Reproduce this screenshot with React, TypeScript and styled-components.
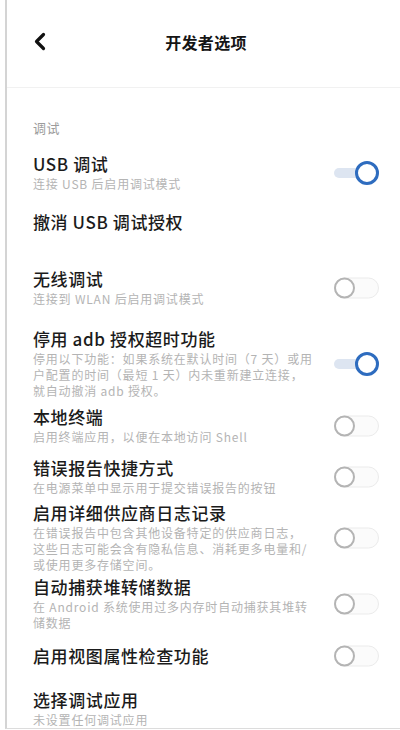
import React from 'react';
import styled, { createGlobalStyle } from 'styled-components';

type Setting = {
  title: string;
  sub?: string[];
  toggle?: 'on' | 'off';
  top: number;
};

const settings: Setting[] = [
  { title: 'USB 调试', sub: ['连接 USB 后启用调试模式'], toggle: 'on', top: 17 },
  { title: '撤消 USB 调试授权', top: 19 },
  { title: '无线调试', sub: ['连接到 WLAN 后启用调试模式'], toggle: 'off', top: 35 },
  {
    title: '停用 adb 授权超时功能',
    sub: [
      '停用以下功能：如果系统在默认时间（7 天）或用',
      '户配置的时间（最短 1 天）内未重新建立连接，',
      '就自动撤消 adb 授权。',
    ],
    toggle: 'on',
    top: 21,
  },
  { title: '本地终端', sub: ['启用终端应用，以便在本地访问 Shell'], toggle: 'off', top: 7 },
  { title: '错误报告快捷方式', sub: ['在电源菜单中显示用于提交错误报告的按钮'], toggle: 'off', top: 12 },
  {
    title: '启用详细供应商日志记录',
    sub: [
      '在错误报告中包含其他设备特定的供应商日志，',
      '这些日志可能会含有隐私信息、消耗更多电量和/',
      '或使用更多存储空间。',
    ],
    toggle: 'off',
    top: 6,
  },
  {
    title: '自动捕获堆转储数据',
    sub: ['在 Android 系统使用过多内存时自动捕获其堆转', '储数据'],
    toggle: 'off',
    top: 3,
  },
  { title: '启用视图属性检查功能', toggle: 'off', top: 13 },
  { title: '选择调试应用', sub: ['未设置任何调试应用'], top: 21 },
];

export default function App() {
  return (
    <>
      <GlobalStyle />
      <Frame>
        <Header>
          <BackButton aria-label="返回">
            <svg width="13" height="19" viewBox="0 0 13 19">
              <path
                d="M10.5 2.5 L3.5 9.5 L10.5 16.5"
                fill="none"
                stroke="#111"
                strokeWidth="3.2"
                strokeLinecap="round"
                strokeLinejoin="round"
              />
            </svg>
          </BackButton>
          <Title>开发者选项</Title>
          <span />
        </Header>
        <List>
          <SectionLabel>调试</SectionLabel>
          {settings.map((s) => (
            <Row key={s.title} $top={s.top}>
              <RowText>
                <RowTitle>{s.title}</RowTitle>
                {s.sub && (
                  <RowSub>
                    {s.sub.map((line) => (
                      <SubLine key={line}>{line}</SubLine>
                    ))}
                  </RowSub>
                )}
              </RowText>
              {s.toggle && <Switch $on={s.toggle === 'on'} />}
            </Row>
          ))}
        </List>
      </Frame>
    </>
  );
}

const GlobalStyle = createGlobalStyle`
  html, body {
    margin: 0;
    padding: 0;
    background: #ffffff;
  }
  body {
    font-family: 'Noto Sans CJK SC', 'Noto Sans', sans-serif;
    color: #1b1b1b;
  }
`;

const Frame = styled.div`
  box-sizing: border-box;
  width: 395px;
  height: 729px;
  margin-left: 5px;
  border-left: 2px solid #d4d4d4;
  border-bottom: 1px solid #dcdcdc;
  overflow: hidden;
  background: #ffffff;
`;

const Header = styled.header`
  box-sizing: border-box;
  display: grid;
  grid-template-columns: 40px 1fr 40px;
  align-items: center;
  height: 88px;
  padding: 0 21px 4px 26px;
  border-bottom: 1px solid #f1f1f1;
`;

const BackButton = styled.span`
  display: flex;
  align-items: center;
  margin-top: -1px;
`;

const Title = styled.h1`
  margin: 0;
  text-align: center;
  font-size: 16px;
  font-weight: 700;
  letter-spacing: 0.3px;
  color: #151515;
`;

const List = styled.div`
  padding: 0 21px 0 26px;
`;

const SectionLabel = styled.div`
  margin-top: 32px;
  font-size: 13px;
  line-height: 16px;
  letter-spacing: 0.5px;
  color: #9c9c9c;
`;

const Row = styled.div<{ $top: number }>`
  display: flex;
  align-items: center;
  margin-top: ${(p) => p.$top}px;
`;

const RowText = styled.div`
  flex: 1;
  min-width: 0;
`;

const RowTitle = styled.div`
  font-size: 17px;
  line-height: 22px;
  font-weight: 500;
  letter-spacing: 0.6px;
  color: #1b1b1b;
  white-space: nowrap;
`;

const RowSub = styled.div`
  margin-top: 1px;
  font-size: 12px;
  line-height: 16px;
  letter-spacing: 0.8px;
  color: #b4b4b4;
`;

const SubLine = styled.span`
  display: block;
  white-space: nowrap;
`;

const Switch = styled.span<{ $on: boolean }>`
  position: relative;
  flex: none;
  width: 45px;
  height: 24px;
  margin-left: 8px;

  &::before {
    content: '';
    position: absolute;
    left: 0;
    top: 50%;
    transform: translateY(-50%);
    box-sizing: border-box;
    width: ${(p) => (p.$on ? '32px' : '45px')};
    height: ${(p) => (p.$on ? '10px' : '21px')};
    border-radius: 11px;
    background: ${(p) => (p.$on ? '#dde5f1' : '#fbfbfb')};
    border: ${(p) => (p.$on ? 'none' : '1px solid #ebebeb')};
  }

  &::after {
    content: '';
    position: absolute;
    top: 50%;
    transform: translateY(-50%);
    box-sizing: border-box;
    ${(p) => (p.$on ? 'right: 0;' : 'left: 0;')}
    width: ${(p) => (p.$on ? '24px' : '21px')};
    height: ${(p) => (p.$on ? '24px' : '21px')};
    border-radius: 50%;
    background: #ffffff;
    border: ${(p) => (p.$on ? '3px solid #2e6cbf' : '2px solid #b4b4b4')};
  }
`;
